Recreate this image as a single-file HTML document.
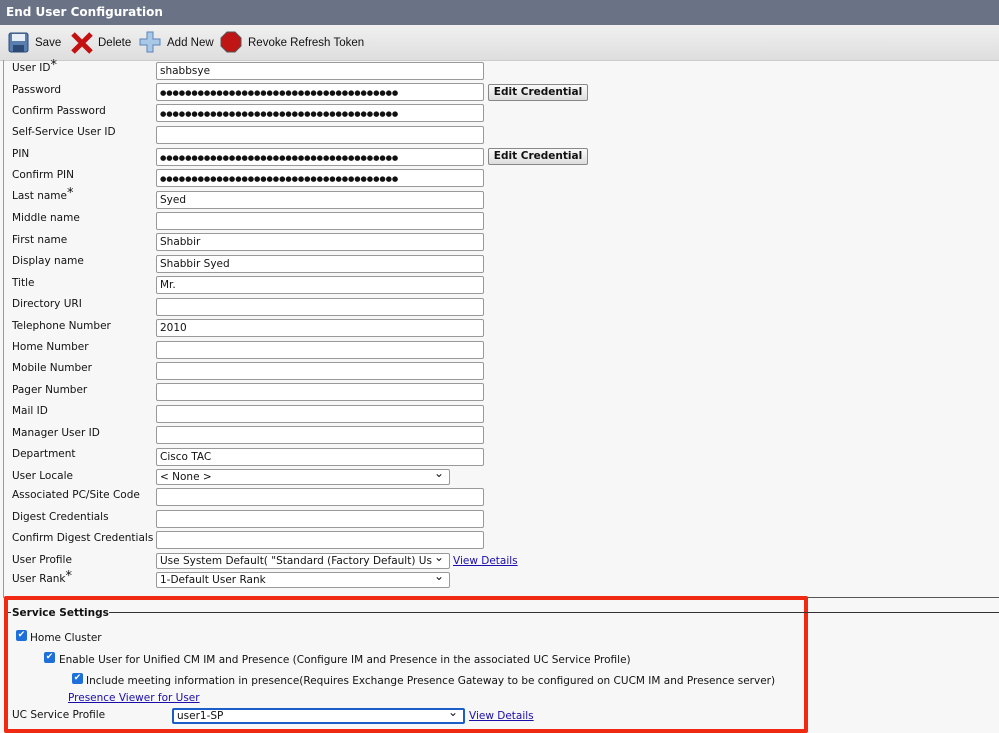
<!DOCTYPE html>
<html><head><style>
body{margin:0;width:999px;height:732px;overflow:hidden;background:#f7f7f7;font-family:"DejaVu Sans","Liberation Sans",sans-serif;font-size:10.5px;color:#111;position:relative}
.a{position:absolute;white-space:nowrap}
#hd{left:0;top:0;width:999px;height:25px;background:#6a7386;color:#fff;font-weight:bold;font-size:12px;line-height:25px;padding-left:6px;box-sizing:border-box}
#tb{left:0;top:25px;width:999px;height:35px;background:linear-gradient(#f0f0f0,#dedede);border-bottom:1px solid #ccc;font-family:"Liberation Sans",sans-serif;font-size:11.5px}
.in{position:absolute;left:156px;width:328px;height:18px;background:#fff;border:1px solid #999;border-radius:2px;box-sizing:border-box;font-size:10.5px;line-height:16px;padding-left:3px;overflow:hidden;white-space:nowrap}
.d{font-size:7.3px;letter-spacing:-0.1px}
.lb{position:absolute;left:12px;font-size:10.5px;white-space:nowrap}
.st{font-size:13px;line-height:8px;vertical-align:top}
.btn{position:absolute;left:488px;width:100px;height:17px;border:1px solid #888;border-radius:2px;background:linear-gradient(#fafafa,#ddd);font-weight:bold;font-size:10.5px;text-align:center;line-height:15px;box-sizing:border-box}
.sel:after{content:"⌄";position:absolute;right:5px;top:-4px;font-size:12px}
a{color:#1a0dab;text-decoration:underline}
.cb{position:absolute;width:11px;height:11px;background:#1e6fd9;border-radius:2px;color:#fff;font-size:9px;line-height:11px;text-align:center}
</style></head><body>
<div class="a" id="hd">End User Configuration</div>
<div class="a" id="tb">
<svg class="a" style="left:8px;top:7px" width="21" height="21"><rect x="1" y="1" width="19" height="19" rx="2" fill="#5a7fae" stroke="#2b4a76"/><rect x="4" y="2" width="13" height="7" fill="#e8eef5"/><rect x="5" y="13" width="11" height="7" fill="#2b4a76"/></svg>
<span class="a" style="left:35px;top:12px">Save</span>
<svg class="a" style="left:70px;top:6px" width="24" height="24"><path d="M3 3L21 21M21 3L3 21" stroke="#c41010" stroke-width="5"/></svg>
<span class="a" style="left:98px;top:12px">Delete</span>
<svg class="a" style="left:139px;top:6px" width="22" height="22"><path d="M8 1h6v7h7v6h-7v7h-6v-7h-7v-6h7z" fill="#a9c7e6" stroke="#5a86b8"/></svg>
<span class="a" style="left:167px;top:12px">Add New</span>
<svg class="a" style="left:220px;top:6px" width="22" height="22"><path d="M7 1h8l6 6v8l-6 6h-8l-6-6v-8z" fill="#c01515" stroke="#555"/></svg>
<span class="a" style="left:248px;top:12px">Revoke Refresh Token</span>
</div>
<div class="a" style="left:3px;top:60px;width:1px;height:538px;background:#999"></div>
<div class="lb" style="top:62px">User ID<span class="st">*</span></div><div class="in" style="top:62px">shabbsye</div>
<div class="lb" style="top:84px">Password</div><div class="in" style="top:83px"><span class="d">●●●●●●●●●●●●●●●●●●●●●●●●●●●●●●●●●●●●●●</span></div><div class="btn" style="top:84px">Edit Credential</div>
<div class="lb" style="top:105px">Confirm Password</div><div class="in" style="top:104px"><span class="d">●●●●●●●●●●●●●●●●●●●●●●●●●●●●●●●●●●●●●●</span></div>
<div class="lb" style="top:126px">Self-Service User ID</div><div class="in" style="top:126px"></div>
<div class="lb" style="top:148px">PIN</div><div class="in" style="top:148px"><span class="d">●●●●●●●●●●●●●●●●●●●●●●●●●●●●●●●●●●●●●●</span></div><div class="btn" style="top:148px">Edit Credential</div>
<div class="lb" style="top:169px">Confirm PIN</div><div class="in" style="top:169px"><span class="d">●●●●●●●●●●●●●●●●●●●●●●●●●●●●●●●●●●●●●●</span></div>
<div class="lb" style="top:190px">Last name<span class="st">*</span></div><div class="in" style="top:191px">Syed</div>
<div class="lb" style="top:212px">Middle name</div><div class="in" style="top:212px"></div>
<div class="lb" style="top:234px">First name</div><div class="in" style="top:233px">Shabbir</div>
<div class="lb" style="top:255px">Display name</div><div class="in" style="top:255px">Shabbir Syed</div>
<div class="lb" style="top:277px">Title</div><div class="in" style="top:276px">Mr.</div>
<div class="lb" style="top:298px">Directory URI</div><div class="in" style="top:298px"></div>
<div class="lb" style="top:320px">Telephone Number</div><div class="in" style="top:319px">2010</div>
<div class="lb" style="top:341px">Home Number</div><div class="in" style="top:341px"></div>
<div class="lb" style="top:362px">Mobile Number</div><div class="in" style="top:362px"></div>
<div class="lb" style="top:384px">Pager Number</div><div class="in" style="top:383px"></div>
<div class="lb" style="top:405px">Mail ID</div><div class="in" style="top:405px"></div>
<div class="lb" style="top:427px">Manager User ID</div><div class="in" style="top:426px"></div>
<div class="lb" style="top:448px">Department</div><div class="in" style="top:448px">Cisco TAC</div>
<div class="lb" style="top:470px">User Locale</div><div class="in sel" style="top:469px;width:294px;height:16px;line-height:14px">&lt; None &gt;</div>
<div class="lb" style="top:489px">Associated PC/Site Code</div><div class="in" style="top:488px"></div>
<div class="lb" style="top:511px">Digest Credentials</div><div class="in" style="top:510px"></div>
<div class="lb" style="top:532px">Confirm Digest Credentials</div><div class="in" style="top:531px"></div>
<div class="lb" style="top:554px">User Profile</div><div class="in sel" style="top:553px;width:294px;height:16px;line-height:14px">Use System Default( "Standard (Factory Default) Us</div><a class="a" style="left:453px;top:555px">View Details</a>
<div class="lb" style="top:573px">User Rank<span class="st">*</span></div><div class="in sel" style="top:572px;width:294px;height:16px;line-height:14px">1-Default User Rank</div>
<div class="a" style="left:806px;top:597px;width:193px;height:1px;background:#555"></div>
<div class="a" style="left:4px;top:596px;width:796px;height:129px;border:4px solid #f02a12;border-radius:2px"></div>
<div class="a" style="left:8px;top:612px;width:3px;height:1px;background:#333"></div>
<div class="a" style="left:108px;top:612px;width:891px;height:1px;background:#333"></div>
<div class="a" style="left:12px;top:607px;font-weight:bold;background:#f7f7f7">Service Settings</div>
<div class="cb" style="left:16px;top:630px">✔</div><div class="a" style="left:30px;top:632px">Home Cluster</div>
<div class="cb" style="left:44px;top:652px">✔</div><div class="a" style="left:59px;top:654px">Enable User for Unified CM IM and Presence (Configure IM and Presence in the associated UC Service Profile)</div>
<div class="cb" style="left:72px;top:673px">✔</div><div class="a" style="left:86px;top:675px">Include meeting information in presence(Requires Exchange Presence Gateway to be configured on CUCM IM and Presence server)</div>
<a class="a" style="left:68px;top:692px">Presence Viewer for User</a>
<div class="lb" style="top:709px">UC Service Profile</div>
<div class="in sel" style="left:172px;top:708px;width:293px;height:16px;line-height:12px;border:2px solid #1a5fc8">user1-SP</div>
<a class="a" style="left:469px;top:710px">View Details</a>
</body></html>
